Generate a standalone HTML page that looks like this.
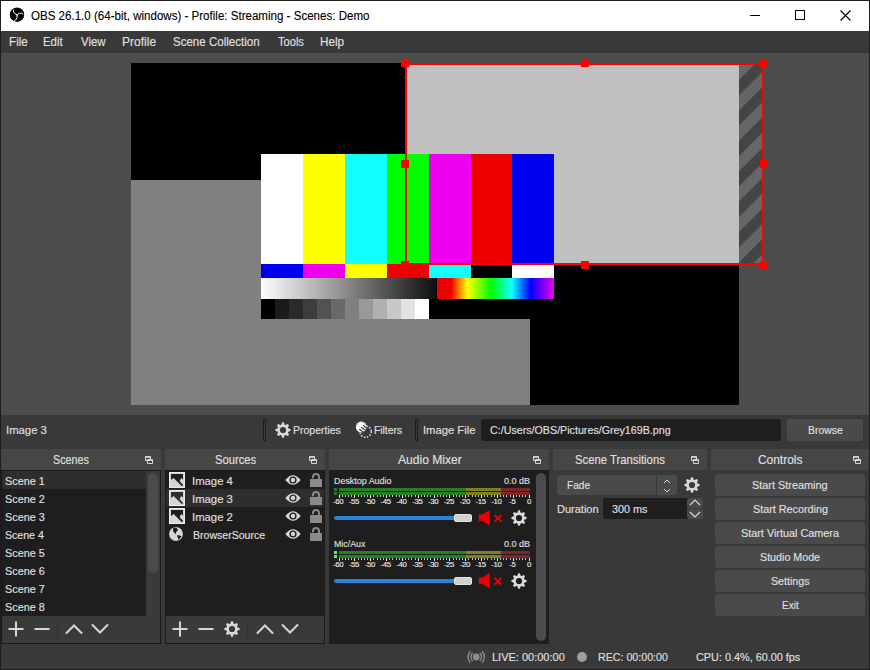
<!DOCTYPE html>
<html><head><meta charset="utf-8">
<style>
*{margin:0;padding:0;box-sizing:border-box}
html,body{width:870px;height:670px;overflow:hidden;background:#1d1d1d;font-family:"Liberation Sans",sans-serif}
.a{position:absolute}
.tx{position:absolute;white-space:pre;line-height:normal;transform-origin:0 0;font-family:"Liberation Sans",sans-serif;-webkit-text-stroke:0.12px currentColor}
svg{position:absolute;overflow:visible}
</style></head><body>
<!-- title bar -->
<div class="a" style="left:1px;top:1px;width:868px;height:30px;background:#fff"></div>
<svg style="left:9px;top:7px" width="16" height="16" viewBox="0 0 16 16">
 <circle cx="8" cy="7.7" r="7.2" fill="#000"/>
 <g fill="none" stroke="#fff" stroke-width="1" stroke-linecap="round">
  <path d="M7.9,7.9 L5.6,6.4 Q4.2,5.4 4.3,3"/>
  <path d="M7.9,7.9 L10.4,6.3 Q12.6,5.6 13.8,7"/>
  <path d="M7.9,7.9 L8.1,10.2 Q8,12.6 5,14.2"/>
 </g>
</svg>
<div class="a" style="left:750px;top:15px;width:10px;height:1px;background:#000"></div>
<div class="a" style="left:795px;top:10px;width:10px;height:10px;border:1px solid #000"></div>
<svg style="left:840px;top:10px" width="11" height="11" viewBox="0 0 11 11"><path d="M0.5,0.5 L10.5,10.5 M10.5,0.5 L0.5,10.5" stroke="#000" stroke-width="1.1"/></svg>
<!-- menubar -->
<div class="a" style="left:1px;top:31px;width:868px;height:22px;background:#3a393a"></div>
<!-- preview -->
<div class="a" style="left:1px;top:53px;width:868px;height:362px;background:#4c4c4c"></div>
<div class="a" style="left:131px;top:63px;width:608px;height:342px;background:#000"></div>
<div class="a" style="left:131px;top:180px;width:399px;height:225px;background:#808080"></div>
<div class="a" style="left:405px;top:63px;width:334px;height:202px;background:#c0c0c0"></div>
<svg style="overflow:hidden;left:739px;top:63px" width="25" height="202" viewBox="0 0 25 202"><rect width="25" height="202" fill="#666"/><g fill="#444"><polygon points="-43.8,0 -28.6,0 -268.6,240 -283.8,240"/><polygon points="-13.4,0 1.8,0 -238.2,240 -253.4,240"/><polygon points="17.0,0 32.2,0 -207.8,240 -223.0,240"/><polygon points="47.4,0 62.6,0 -177.4,240 -192.6,240"/><polygon points="77.8,0 93.0,0 -147.0,240 -162.2,240"/><polygon points="108.2,0 123.4,0 -116.6,240 -131.8,240"/><polygon points="138.6,0 153.8,0 -86.2,240 -101.4,240"/><polygon points="169.0,0 184.2,0 -55.8,240 -71.0,240"/><polygon points="199.4,0 214.6,0 -25.4,240 -40.6,240"/><polygon points="229.8,0 245.0,0 5.0,240 -10.2,240"/></g></svg>
<!-- test pattern -->
<div class="a" style="left:261px;top:154px;width:293px;height:165px;background:#000"></div>
<div class="a" style="left:261px;top:154px;width:293px;height:110px;background:linear-gradient(90deg,#fff 0px,#fff 42px,#ff0 42px,#ff0 84px,#1ff 84px,#1ff 126px,#0f0 126px,#0f0 168px,#e0e 168px,#e0e 210px,#e00 210px,#e00 251px,#00e 251px,#00e 293px)"></div>
<div class="a" style="left:261px;top:264px;width:293px;height:14px;background:linear-gradient(90deg,#00e 0px,#00e 42px,#e0e 42px,#e0e 84px,#ff0 84px,#ff0 126px,#e00 126px,#e00 168px,#1ff 168px,#1ff 210px,#000 210px,#000 251px,#fff 251px,#fff 293px)"></div>
<div class="a" style="left:261px;top:278px;width:175px;height:21px;background:linear-gradient(90deg,#fff,#0e0e0e)"></div>
<div class="a" style="left:437px;top:278px;width:117px;height:21px;background:linear-gradient(90deg,#e00 0%,#e00 12%,#ff0 26%,#0f0 46%,#1ff 64%,#00f 80%,#e0e 100%)"></div>
<div class="a" style="left:261px;top:299px;width:168px;height:20px;background:linear-gradient(90deg,#000 0,#000 8.333%,#1b1b1b 8.333%,#1b1b1b 16.67%,#2a2a2a 16.67%,#2a2a2a 25%,#3d3d3d 25%,#3d3d3d 33.33%,#525252 33.33%,#525252 41.67%,#696969 41.67%,#696969 50%,#808080 50%,#808080 58.33%,#999 58.33%,#999 66.67%,#b0b0b0 66.67%,#b0b0b0 75%,#c8c8c8 75%,#c8c8c8 83.33%,#e3e3e3 83.33%,#e3e3e3 91.67%,#fff 91.67%,#fff 100%)"></div>
<!-- red selection -->
<div class="a" style="left:405px;top:63px;width:359px;height:2px;background:#f00"></div>
<div class="a" style="left:405px;top:263px;width:359px;height:2px;background:#f00"></div>
<div class="a" style="left:405px;top:63px;width:2px;height:202px;background:#f00"></div>
<div class="a" style="left:762px;top:63px;width:2px;height:202px;background:#f00"></div>
<div class="a" style="left:401px;top:59px;width:8px;height:8px;background:#f00"></div>
<div class="a" style="left:581px;top:59px;width:8px;height:8px;background:#f00"></div>
<div class="a" style="left:760px;top:59px;width:8px;height:8px;background:#f00"></div>
<div class="a" style="left:401px;top:160px;width:8px;height:8px;background:#f00"></div>
<div class="a" style="left:760px;top:160px;width:8px;height:8px;background:#f00"></div>
<div class="a" style="left:401px;top:261px;width:8px;height:8px;background:#f00"></div>
<div class="a" style="left:581px;top:261px;width:8px;height:8px;background:#f00"></div>
<div class="a" style="left:760px;top:261px;width:8px;height:8px;background:#f00"></div>
<!-- toolbar row -->
<div class="a" style="left:1px;top:415px;width:868px;height:34px;background:#3a393a"></div>
<div class="a" style="left:263px;top:419px;width:3px;height:22px;border:1px solid #1f1e1f"></div>
<div class="a" style="left:415px;top:419px;width:3px;height:22px;border:1px solid #1f1e1f"></div>
<svg style="left:275px;top:422px" width="16" height="16" viewBox="-8 -8 16 16"><use href="#gear"/></svg>
<svg style="left:354px;top:420px" width="20" height="20" viewBox="0 0 20 20">
 <defs><clipPath id="fc"><circle cx="7.2" cy="7" r="5.4"/></clipPath></defs>
 <circle cx="11.6" cy="11.6" r="5.7" fill="none" stroke="#e4e4e4" stroke-width="1.5" stroke-dasharray="1.5 1.5"/>
 <circle cx="7.2" cy="7" r="5.4" fill="#f6f6f6"/>
 <g clip-path="url(#fc)" stroke="#3a393a" stroke-width="1.2"><path d="M5.2,9.2 L10.7,13 M7.2,7.3 L12.8,11.1 M9.3,5.4 L13.4,8.7"/></g>
</svg>
<div class="a" style="left:481px;top:419px;width:300px;height:22px;background:#1f1e1f;border-radius:3px"></div>
<div class="a" style="left:787px;top:419px;width:76px;height:22px;background:#4b4a4b;border-radius:3px"></div>
<!-- docks -->
<div class="a" style="left:1px;top:449px;width:868px;height:195px;background:#3a393a"></div>
<div class="a" style="left:1px;top:449px;width:160px;height:21px;background:#474647"></div>
<div class="a" style="left:165px;top:449px;width:160px;height:21px;background:#474647"></div>
<div class="a" style="left:329px;top:449px;width:220px;height:21px;background:#474647"></div>
<div class="a" style="left:553px;top:449px;width:154px;height:21px;background:#474647"></div>
<div class="a" style="left:711px;top:449px;width:158px;height:21px;background:#474647"></div>
<!-- float icons -->
<svg style="left:145px;top:456px" width="9" height="8"><path d="M0.5,0.5h5v4h-5z M2.5,3.5h5v4h-5z" fill="#474647" stroke="#d8d8d8" stroke-width="1"/><path d="M2.5,3.5h5v1.3h-5z" fill="#d8d8d8"/><path d="M0.5,0.5h5v1.3h-5z" fill="#d8d8d8"/></svg>
<svg style="left:309px;top:456px" width="9" height="8"><path d="M0.5,0.5h5v4h-5z M2.5,3.5h5v4h-5z" fill="#474647" stroke="#d8d8d8" stroke-width="1"/><path d="M2.5,3.5h5v1.3h-5z" fill="#d8d8d8"/><path d="M0.5,0.5h5v1.3h-5z" fill="#d8d8d8"/></svg>
<svg style="left:533px;top:456px" width="9" height="8"><path d="M0.5,0.5h5v4h-5z M2.5,3.5h5v4h-5z" fill="#474647" stroke="#d8d8d8" stroke-width="1"/><path d="M2.5,3.5h5v1.3h-5z" fill="#d8d8d8"/><path d="M0.5,0.5h5v1.3h-5z" fill="#d8d8d8"/></svg>
<svg style="left:691px;top:456px" width="9" height="8"><path d="M0.5,0.5h5v4h-5z M2.5,3.5h5v4h-5z" fill="#474647" stroke="#d8d8d8" stroke-width="1"/><path d="M2.5,3.5h5v1.3h-5z" fill="#d8d8d8"/><path d="M0.5,0.5h5v1.3h-5z" fill="#d8d8d8"/></svg>
<svg style="left:853px;top:456px" width="9" height="8"><path d="M0.5,0.5h5v4h-5z M2.5,3.5h5v4h-5z" fill="#474647" stroke="#d8d8d8" stroke-width="1"/><path d="M2.5,3.5h5v1.3h-5z" fill="#d8d8d8"/><path d="M0.5,0.5h5v1.3h-5z" fill="#d8d8d8"/></svg>
<!-- scenes list -->
<div class="a" style="left:1px;top:470px;width:160px;height:174px;background:#3b3a3b;border:1px solid #1a191a"></div>
<div class="a" style="left:2px;top:471px;width:144px;height:145px;background:#1f1e1f"></div>
<div class="a" style="left:2px;top:471px;width:144px;height:18px;background:#2f2e2f"></div>
<div class="a" style="left:148px;top:473px;width:10px;height:100px;background:#4c4b4c;border-radius:5px"></div>
<!-- sources list -->
<div class="a" style="left:165px;top:470px;width:160px;height:174px;background:#3b3a3b;border:1px solid #1a191a"></div>
<div class="a" style="left:166px;top:471px;width:158px;height:145px;background:#1f1e1f"></div>
<div class="a" style="left:166px;top:489px;width:158px;height:18px;background:#2f2e2f"></div>
<!-- audio mixer -->
<div class="a" style="left:329px;top:470px;width:220px;height:174px;background:#1f1e1f"></div>
<div class="a" style="left:536px;top:473px;width:10px;height:168px;background:#4c4b4c;border-radius:5px"></div>
<!-- transitions -->
<div class="a" style="left:557px;top:475px;width:120px;height:20px;background:#4b4a4b;border-radius:3px"></div>
<div class="a" style="left:656px;top:475px;width:1px;height:20px;background:#3a393a"></div>
<div class="a" style="left:603px;top:498px;width:85px;height:21px;background:#1f1e1f;border-radius:3px 0 0 3px"></div>
<div class="a" style="left:687px;top:498px;width:16px;height:10px;background:#4b4a4b;border-radius:3px 3px 0 0"></div>
<div class="a" style="left:687px;top:509px;width:16px;height:10px;background:#4b4a4b;border-radius:0 0 3px 3px"></div>
<svg style="left:684px;top:477px" width="16" height="16" viewBox="-8 -8 16 16"><use href="#gear"/></svg>
<svg style="left:660px;top:478px" width="14" height="16"><path d="M4,5 L7,2 L10,5 M4,11 L7,14 L10,11" fill="none" stroke="#d8d8d8" stroke-width="1"/></svg>
<svg style="left:687px;top:498px" width="16" height="21"><path d="M3,7 L8,2 L13,7 M3,14 L8,19 L13,14" fill="none" stroke="#d8d8d8" stroke-width="1.2"/></svg>
<!-- controls -->
<div class="a" style="left:715px;top:474px;width:150px;height:22px;background:#4b4a4b;border-radius:3px"></div>
<div class="a" style="left:715px;top:498px;width:150px;height:22px;background:#4b4a4b;border-radius:3px"></div>
<div class="a" style="left:715px;top:522px;width:150px;height:22px;background:#4b4a4b;border-radius:3px"></div>
<div class="a" style="left:715px;top:546px;width:150px;height:22px;background:#4b4a4b;border-radius:3px"></div>
<div class="a" style="left:715px;top:570px;width:150px;height:22px;background:#4b4a4b;border-radius:3px"></div>
<div class="a" style="left:715px;top:594px;width:150px;height:22px;background:#4b4a4b;border-radius:3px"></div>
<!-- status bar -->
<div class="a" style="left:1px;top:644px;width:868px;height:25px;background:#3a393a"></div>
<svg style="left:466px;top:647px" width="21" height="20" viewBox="0 0 21 20">
 <circle cx="10.2" cy="10" r="3.4" fill="#8c8c8c"/>
 <g fill="none" stroke="#8c8c8c" stroke-width="1.4">
  <path d="M6.6,6 A5.6,5.6 0 0 0 6.6,14"/><path d="M13.8,6 A5.6,5.6 0 0 1 13.8,14"/>
  <path d="M4.4,4.2 A8.4,8.4 0 0 0 4.4,15.8"/><path d="M16,4.2 A8.4,8.4 0 0 1 16,15.8"/>
 </g>
</svg>
<div class="a" style="left:577px;top:652px;width:10px;height:10px;border-radius:50%;background:#a0a0a0"></div>
<svg width="0" height="0" style="position:absolute">
 <defs>
  <g id="gear"><path fill-rule="evenodd" fill="#d8d8d8" d="M-1.73,-5.33 L-0.80,-7.66 L0.80,-7.66 L1.73,-5.33 L2.54,-4.99 L4.85,-5.98 L5.98,-4.85 L4.99,-2.54 L5.33,-1.73 L7.66,-0.80 L7.66,0.80 L5.33,1.73 L4.99,2.54 L5.98,4.85 L4.85,5.98 L2.54,4.99 L1.73,5.33 L0.80,7.66 L-0.80,7.66 L-1.73,5.33 L-2.54,4.99 L-4.85,5.98 L-5.98,4.85 L-4.99,2.54 L-5.33,1.73 L-7.66,0.80 L-7.66,-0.80 L-5.33,-1.73 L-4.99,-2.54 L-5.98,-4.85 L-4.85,-5.98 L-2.54,-4.99Z M0,-3.1A3.1,3.1 0 1 0 0,3.1A3.1,3.1 0 1 0 0,-3.1Z"/></g>
 </defs>
</svg>
<svg style="left:169px;top:472px" width="16" height="16" viewBox="0 0 16 16">
<rect x="0" y="0" width="16" height="16" fill="#d6d6d6"/>
<path d="M2,2 L14,2 L14,7.6 L12.1,6 L10.6,9.3 L14,12.7 L13.7,13.8 L12.7,13.9 L4.6,6 L2,7.9Z" fill="#1f1e1f"/>
<rect x="0.5" y="0.5" width="15" height="15" fill="none" stroke="#eaeaea" stroke-width="1"/>
</svg>
<svg style="left:169px;top:490px" width="16" height="16" viewBox="0 0 16 16">
<rect x="0" y="0" width="16" height="16" fill="#d6d6d6"/>
<path d="M2,2 L14,2 L14,7.6 L12.1,6 L10.6,9.3 L14,12.7 L13.7,13.8 L12.7,13.9 L4.6,6 L2,7.9Z" fill="#2f2e2f"/>
<rect x="0.5" y="0.5" width="15" height="15" fill="none" stroke="#eaeaea" stroke-width="1"/>
</svg>
<svg style="left:169px;top:508px" width="16" height="16" viewBox="0 0 16 16">
<rect x="0" y="0" width="16" height="16" fill="#d6d6d6"/>
<path d="M2,2 L14,2 L14,7.6 L12.1,6 L10.6,9.3 L14,12.7 L13.7,13.8 L12.7,13.9 L4.6,6 L2,7.9Z" fill="#1f1e1f"/>
<rect x="0.5" y="0.5" width="15" height="15" fill="none" stroke="#eaeaea" stroke-width="1"/>
</svg>
<svg style="left:168px;top:526px" width="16" height="16" viewBox="0 0 16 16">
<circle cx="8" cy="8" r="6.9" fill="#d6d6d6"/>
<path d="M5.4,1.6 L8.4,1.7 L9.9,3.4 L9.4,5 L8.1,6.1 L7.6,8.6 L6.7,7.1 L5.4,6 L5,3.8Z" fill="#1f1e1f"/>
<path d="M9.2,9.2 L11.2,9.2 L13.7,10.4 L12.1,12 L10.6,14.2 L10.1,12.2 L9.3,10.6Z" fill="#1f1e1f"/>
</svg>
<svg style="left:285px;top:474px" width="16" height="12" viewBox="0 0 16 12">
<path d="M0.3,6 Q8,-3.5 15.7,6 Q8,15.5 0.3,6Z" fill="#d6d6d6"/>
<circle cx="8" cy="6" r="3.6" fill="#1f1e1f"/><circle cx="8" cy="6" r="2.2" fill="#d6d6d6"/>
</svg>
<svg style="left:309px;top:472px" width="14" height="17" viewBox="0 0 14 17">
<path d="M4,6.2 L4,5 A3,3 0 0 1 10,5 L10,8" fill="none" stroke="#8a8a8a" stroke-width="2"/>
<rect x="1" y="7" width="12" height="8" fill="#8a8a8a"/>
</svg>
<svg style="left:285px;top:492px" width="16" height="12" viewBox="0 0 16 12">
<path d="M0.3,6 Q8,-3.5 15.7,6 Q8,15.5 0.3,6Z" fill="#d6d6d6"/>
<circle cx="8" cy="6" r="3.6" fill="#2f2e2f"/><circle cx="8" cy="6" r="2.2" fill="#d6d6d6"/>
</svg>
<svg style="left:309px;top:490px" width="14" height="17" viewBox="0 0 14 17">
<path d="M4,6.2 L4,5 A3,3 0 0 1 10,5 L10,8" fill="none" stroke="#8a8a8a" stroke-width="2"/>
<rect x="1" y="7" width="12" height="8" fill="#8a8a8a"/>
</svg>
<svg style="left:285px;top:510px" width="16" height="12" viewBox="0 0 16 12">
<path d="M0.3,6 Q8,-3.5 15.7,6 Q8,15.5 0.3,6Z" fill="#d6d6d6"/>
<circle cx="8" cy="6" r="3.6" fill="#1f1e1f"/><circle cx="8" cy="6" r="2.2" fill="#d6d6d6"/>
</svg>
<svg style="left:309px;top:508px" width="14" height="17" viewBox="0 0 14 17">
<path d="M4,6.2 L4,5 A3,3 0 0 1 10,5 L10,8" fill="none" stroke="#8a8a8a" stroke-width="2"/>
<rect x="1" y="7" width="12" height="8" fill="#8a8a8a"/>
</svg>
<svg style="left:285px;top:528px" width="16" height="12" viewBox="0 0 16 12">
<path d="M0.3,6 Q8,-3.5 15.7,6 Q8,15.5 0.3,6Z" fill="#d6d6d6"/>
<circle cx="8" cy="6" r="3.6" fill="#1f1e1f"/><circle cx="8" cy="6" r="2.2" fill="#d6d6d6"/>
</svg>
<svg style="left:309px;top:526px" width="14" height="17" viewBox="0 0 14 17">
<path d="M4,6.2 L4,5 A3,3 0 0 1 10,5 L10,8" fill="none" stroke="#8a8a8a" stroke-width="2"/>
<rect x="1" y="7" width="12" height="8" fill="#8a8a8a"/>
</svg>
<div class="a" style="left:334px;top:488px;width:3px;height:3px;background:#267f26"></div>
<div class="a" style="left:339px;top:488px;width:127px;height:3px;background:#267f26"></div>
<div class="a" style="left:466px;top:488px;width:35px;height:3px;background:#7f7f26"></div>
<div class="a" style="left:501px;top:488px;width:29px;height:3px;background:#7f2626"></div>
<div class="a" style="left:334px;top:492px;width:3px;height:3px;background:#267f26"></div>
<div class="a" style="left:339px;top:492px;width:127px;height:3px;background:#267f26"></div>
<div class="a" style="left:466px;top:492px;width:35px;height:3px;background:#7f7f26"></div>
<div class="a" style="left:501px;top:492px;width:29px;height:3px;background:#7f2626"></div>
<svg style="left:0;top:495px" width="870" height="4"><rect x="339" y="0" width="1" height="3" fill="#eeeeee"/><rect x="342" y="0" width="1" height="2" fill="#bdbdbd"/><rect x="345" y="0" width="1" height="2" fill="#bdbdbd"/><rect x="348" y="0" width="1" height="2" fill="#bdbdbd"/><rect x="351" y="0" width="1" height="2" fill="#bdbdbd"/><rect x="354" y="0" width="1" height="3" fill="#eeeeee"/><rect x="358" y="0" width="1" height="2" fill="#bdbdbd"/><rect x="361" y="0" width="1" height="2" fill="#bdbdbd"/><rect x="364" y="0" width="1" height="2" fill="#bdbdbd"/><rect x="367" y="0" width="1" height="2" fill="#bdbdbd"/><rect x="370" y="0" width="1" height="3" fill="#eeeeee"/><rect x="373" y="0" width="1" height="2" fill="#bdbdbd"/><rect x="377" y="0" width="1" height="2" fill="#bdbdbd"/><rect x="380" y="0" width="1" height="2" fill="#bdbdbd"/><rect x="383" y="0" width="1" height="2" fill="#bdbdbd"/><rect x="386" y="0" width="1" height="3" fill="#eeeeee"/><rect x="389" y="0" width="1" height="2" fill="#bdbdbd"/><rect x="392" y="0" width="1" height="2" fill="#bdbdbd"/><rect x="396" y="0" width="1" height="2" fill="#bdbdbd"/><rect x="399" y="0" width="1" height="2" fill="#bdbdbd"/><rect x="402" y="0" width="1" height="3" fill="#eeeeee"/><rect x="405" y="0" width="1" height="2" fill="#bdbdbd"/><rect x="408" y="0" width="1" height="2" fill="#bdbdbd"/><rect x="411" y="0" width="1" height="2" fill="#bdbdbd"/><rect x="415" y="0" width="1" height="2" fill="#bdbdbd"/><rect x="418" y="0" width="1" height="3" fill="#eeeeee"/><rect x="421" y="0" width="1" height="2" fill="#bdbdbd"/><rect x="424" y="0" width="1" height="2" fill="#bdbdbd"/><rect x="427" y="0" width="1" height="2" fill="#bdbdbd"/><rect x="430" y="0" width="1" height="2" fill="#bdbdbd"/><rect x="434" y="0" width="1" height="3" fill="#eeeeee"/><rect x="437" y="0" width="1" height="2" fill="#bdbdbd"/><rect x="440" y="0" width="1" height="2" fill="#bdbdbd"/><rect x="443" y="0" width="1" height="2" fill="#bdbdbd"/><rect x="446" y="0" width="1" height="2" fill="#bdbdbd"/><rect x="449" y="0" width="1" height="3" fill="#eeeeee"/><rect x="453" y="0" width="1" height="2" fill="#bdbdbd"/><rect x="456" y="0" width="1" height="2" fill="#bdbdbd"/><rect x="459" y="0" width="1" height="2" fill="#bdbdbd"/><rect x="462" y="0" width="1" height="2" fill="#bdbdbd"/><rect x="465" y="0" width="1" height="3" fill="#eeeeee"/><rect x="468" y="0" width="1" height="2" fill="#bdbdbd"/><rect x="472" y="0" width="1" height="2" fill="#bdbdbd"/><rect x="475" y="0" width="1" height="2" fill="#bdbdbd"/><rect x="478" y="0" width="1" height="2" fill="#bdbdbd"/><rect x="481" y="0" width="1" height="3" fill="#eeeeee"/><rect x="484" y="0" width="1" height="2" fill="#bdbdbd"/><rect x="487" y="0" width="1" height="2" fill="#bdbdbd"/><rect x="491" y="0" width="1" height="2" fill="#bdbdbd"/><rect x="494" y="0" width="1" height="2" fill="#bdbdbd"/><rect x="497" y="0" width="1" height="3" fill="#eeeeee"/><rect x="500" y="0" width="1" height="2" fill="#bdbdbd"/><rect x="503" y="0" width="1" height="2" fill="#bdbdbd"/><rect x="506" y="0" width="1" height="2" fill="#bdbdbd"/><rect x="510" y="0" width="1" height="2" fill="#bdbdbd"/><rect x="513" y="0" width="1" height="3" fill="#eeeeee"/><rect x="516" y="0" width="1" height="2" fill="#bdbdbd"/><rect x="519" y="0" width="1" height="2" fill="#bdbdbd"/><rect x="522" y="0" width="1" height="2" fill="#bdbdbd"/><rect x="525" y="0" width="1" height="2" fill="#bdbdbd"/><rect x="529" y="0" width="1" height="3" fill="#eeeeee"/></svg>
<div class="tx" style="left:327.0px;top:497px;width:24px;text-align:center;font-size:7.8px;color:#f0f0f0;letter-spacing:-0.4px;padding-right:1.8px">-60</div>
<div class="tx" style="left:342.8px;top:497px;width:24px;text-align:center;font-size:7.8px;color:#f0f0f0;letter-spacing:-0.4px;padding-right:1.8px">-55</div>
<div class="tx" style="left:358.7px;top:497px;width:24px;text-align:center;font-size:7.8px;color:#f0f0f0;letter-spacing:-0.4px;padding-right:1.8px">-50</div>
<div class="tx" style="left:374.5px;top:497px;width:24px;text-align:center;font-size:7.8px;color:#f0f0f0;letter-spacing:-0.4px;padding-right:1.8px">-45</div>
<div class="tx" style="left:390.3px;top:497px;width:24px;text-align:center;font-size:7.8px;color:#f0f0f0;letter-spacing:-0.4px;padding-right:1.8px">-40</div>
<div class="tx" style="left:406.2px;top:497px;width:24px;text-align:center;font-size:7.8px;color:#f0f0f0;letter-spacing:-0.4px;padding-right:1.8px">-35</div>
<div class="tx" style="left:422.0px;top:497px;width:24px;text-align:center;font-size:7.8px;color:#f0f0f0;letter-spacing:-0.4px;padding-right:1.8px">-30</div>
<div class="tx" style="left:437.8px;top:497px;width:24px;text-align:center;font-size:7.8px;color:#f0f0f0;letter-spacing:-0.4px;padding-right:1.8px">-25</div>
<div class="tx" style="left:453.7px;top:497px;width:24px;text-align:center;font-size:7.8px;color:#f0f0f0;letter-spacing:-0.4px;padding-right:1.8px">-20</div>
<div class="tx" style="left:469.5px;top:497px;width:24px;text-align:center;font-size:7.8px;color:#f0f0f0;letter-spacing:-0.4px;padding-right:1.8px">-15</div>
<div class="tx" style="left:485.3px;top:497px;width:24px;text-align:center;font-size:7.8px;color:#f0f0f0;letter-spacing:-0.4px;padding-right:1.8px">-10</div>
<div class="tx" style="left:501.2px;top:497px;width:24px;text-align:center;font-size:7.8px;color:#f0f0f0;letter-spacing:-0.4px;padding-right:1.8px">-5</div>
<div class="tx" style="left:517.0px;top:497px;width:24px;text-align:center;font-size:7.8px;color:#f0f0f0;letter-spacing:-0.4px;padding-right:0px">0</div>
<div class="a" style="left:334px;top:516px;width:122px;height:4px;background:#2a82da;border-radius:2px 0 0 2px"></div>
<div class="a" style="left:454px;top:514px;width:18px;height:8px;background:#d0d0d0;border:1px solid #e4e4e4;border-radius:2px"></div>
<svg style="left:478px;top:510px" width="26" height="16" viewBox="0 0 26 16">
<path d="M0.8,4.5 L4.5,4.5 L11.6,0 L11.6,15.6 L4.5,11 L0.8,11Z" fill="#e00"/>
<path d="M16.6,5 L23.4,11.6 M23.4,5 L16.6,11.6" stroke="#e00" stroke-width="1.8"/>
</svg>
<svg style="left:511px;top:510px" width="16" height="16" viewBox="-8 -8 16 16"><use href="#gear" fill="#d8d8d8"/></svg>
<div class="a" style="left:334px;top:551px;width:3px;height:3px;background:#4cff4c"></div>
<div class="a" style="left:339px;top:551px;width:127px;height:3px;background:#267f26"></div>
<div class="a" style="left:466px;top:551px;width:35px;height:3px;background:#7f7f26"></div>
<div class="a" style="left:501px;top:551px;width:29px;height:3px;background:#7f2626"></div>
<div class="a" style="left:334px;top:555px;width:3px;height:3px;background:#4cff4c"></div>
<div class="a" style="left:339px;top:555px;width:127px;height:3px;background:#267f26"></div>
<div class="a" style="left:466px;top:555px;width:35px;height:3px;background:#7f7f26"></div>
<div class="a" style="left:501px;top:555px;width:29px;height:3px;background:#7f2626"></div>
<svg style="left:0;top:558px" width="870" height="4"><rect x="339" y="0" width="1" height="3" fill="#eeeeee"/><rect x="342" y="0" width="1" height="2" fill="#bdbdbd"/><rect x="345" y="0" width="1" height="2" fill="#bdbdbd"/><rect x="348" y="0" width="1" height="2" fill="#bdbdbd"/><rect x="351" y="0" width="1" height="2" fill="#bdbdbd"/><rect x="354" y="0" width="1" height="3" fill="#eeeeee"/><rect x="358" y="0" width="1" height="2" fill="#bdbdbd"/><rect x="361" y="0" width="1" height="2" fill="#bdbdbd"/><rect x="364" y="0" width="1" height="2" fill="#bdbdbd"/><rect x="367" y="0" width="1" height="2" fill="#bdbdbd"/><rect x="370" y="0" width="1" height="3" fill="#eeeeee"/><rect x="373" y="0" width="1" height="2" fill="#bdbdbd"/><rect x="377" y="0" width="1" height="2" fill="#bdbdbd"/><rect x="380" y="0" width="1" height="2" fill="#bdbdbd"/><rect x="383" y="0" width="1" height="2" fill="#bdbdbd"/><rect x="386" y="0" width="1" height="3" fill="#eeeeee"/><rect x="389" y="0" width="1" height="2" fill="#bdbdbd"/><rect x="392" y="0" width="1" height="2" fill="#bdbdbd"/><rect x="396" y="0" width="1" height="2" fill="#bdbdbd"/><rect x="399" y="0" width="1" height="2" fill="#bdbdbd"/><rect x="402" y="0" width="1" height="3" fill="#eeeeee"/><rect x="405" y="0" width="1" height="2" fill="#bdbdbd"/><rect x="408" y="0" width="1" height="2" fill="#bdbdbd"/><rect x="411" y="0" width="1" height="2" fill="#bdbdbd"/><rect x="415" y="0" width="1" height="2" fill="#bdbdbd"/><rect x="418" y="0" width="1" height="3" fill="#eeeeee"/><rect x="421" y="0" width="1" height="2" fill="#bdbdbd"/><rect x="424" y="0" width="1" height="2" fill="#bdbdbd"/><rect x="427" y="0" width="1" height="2" fill="#bdbdbd"/><rect x="430" y="0" width="1" height="2" fill="#bdbdbd"/><rect x="434" y="0" width="1" height="3" fill="#eeeeee"/><rect x="437" y="0" width="1" height="2" fill="#bdbdbd"/><rect x="440" y="0" width="1" height="2" fill="#bdbdbd"/><rect x="443" y="0" width="1" height="2" fill="#bdbdbd"/><rect x="446" y="0" width="1" height="2" fill="#bdbdbd"/><rect x="449" y="0" width="1" height="3" fill="#eeeeee"/><rect x="453" y="0" width="1" height="2" fill="#bdbdbd"/><rect x="456" y="0" width="1" height="2" fill="#bdbdbd"/><rect x="459" y="0" width="1" height="2" fill="#bdbdbd"/><rect x="462" y="0" width="1" height="2" fill="#bdbdbd"/><rect x="465" y="0" width="1" height="3" fill="#eeeeee"/><rect x="468" y="0" width="1" height="2" fill="#bdbdbd"/><rect x="472" y="0" width="1" height="2" fill="#bdbdbd"/><rect x="475" y="0" width="1" height="2" fill="#bdbdbd"/><rect x="478" y="0" width="1" height="2" fill="#bdbdbd"/><rect x="481" y="0" width="1" height="3" fill="#eeeeee"/><rect x="484" y="0" width="1" height="2" fill="#bdbdbd"/><rect x="487" y="0" width="1" height="2" fill="#bdbdbd"/><rect x="491" y="0" width="1" height="2" fill="#bdbdbd"/><rect x="494" y="0" width="1" height="2" fill="#bdbdbd"/><rect x="497" y="0" width="1" height="3" fill="#eeeeee"/><rect x="500" y="0" width="1" height="2" fill="#bdbdbd"/><rect x="503" y="0" width="1" height="2" fill="#bdbdbd"/><rect x="506" y="0" width="1" height="2" fill="#bdbdbd"/><rect x="510" y="0" width="1" height="2" fill="#bdbdbd"/><rect x="513" y="0" width="1" height="3" fill="#eeeeee"/><rect x="516" y="0" width="1" height="2" fill="#bdbdbd"/><rect x="519" y="0" width="1" height="2" fill="#bdbdbd"/><rect x="522" y="0" width="1" height="2" fill="#bdbdbd"/><rect x="525" y="0" width="1" height="2" fill="#bdbdbd"/><rect x="529" y="0" width="1" height="3" fill="#eeeeee"/></svg>
<div class="tx" style="left:327.0px;top:560px;width:24px;text-align:center;font-size:7.8px;color:#f0f0f0;letter-spacing:-0.4px;padding-right:1.8px">-60</div>
<div class="tx" style="left:342.8px;top:560px;width:24px;text-align:center;font-size:7.8px;color:#f0f0f0;letter-spacing:-0.4px;padding-right:1.8px">-55</div>
<div class="tx" style="left:358.7px;top:560px;width:24px;text-align:center;font-size:7.8px;color:#f0f0f0;letter-spacing:-0.4px;padding-right:1.8px">-50</div>
<div class="tx" style="left:374.5px;top:560px;width:24px;text-align:center;font-size:7.8px;color:#f0f0f0;letter-spacing:-0.4px;padding-right:1.8px">-45</div>
<div class="tx" style="left:390.3px;top:560px;width:24px;text-align:center;font-size:7.8px;color:#f0f0f0;letter-spacing:-0.4px;padding-right:1.8px">-40</div>
<div class="tx" style="left:406.2px;top:560px;width:24px;text-align:center;font-size:7.8px;color:#f0f0f0;letter-spacing:-0.4px;padding-right:1.8px">-35</div>
<div class="tx" style="left:422.0px;top:560px;width:24px;text-align:center;font-size:7.8px;color:#f0f0f0;letter-spacing:-0.4px;padding-right:1.8px">-30</div>
<div class="tx" style="left:437.8px;top:560px;width:24px;text-align:center;font-size:7.8px;color:#f0f0f0;letter-spacing:-0.4px;padding-right:1.8px">-25</div>
<div class="tx" style="left:453.7px;top:560px;width:24px;text-align:center;font-size:7.8px;color:#f0f0f0;letter-spacing:-0.4px;padding-right:1.8px">-20</div>
<div class="tx" style="left:469.5px;top:560px;width:24px;text-align:center;font-size:7.8px;color:#f0f0f0;letter-spacing:-0.4px;padding-right:1.8px">-15</div>
<div class="tx" style="left:485.3px;top:560px;width:24px;text-align:center;font-size:7.8px;color:#f0f0f0;letter-spacing:-0.4px;padding-right:1.8px">-10</div>
<div class="tx" style="left:501.2px;top:560px;width:24px;text-align:center;font-size:7.8px;color:#f0f0f0;letter-spacing:-0.4px;padding-right:1.8px">-5</div>
<div class="tx" style="left:517.0px;top:560px;width:24px;text-align:center;font-size:7.8px;color:#f0f0f0;letter-spacing:-0.4px;padding-right:0px">0</div>
<div class="a" style="left:334px;top:579px;width:122px;height:4px;background:#2a82da;border-radius:2px 0 0 2px"></div>
<div class="a" style="left:454px;top:577px;width:18px;height:8px;background:#d0d0d0;border:1px solid #e4e4e4;border-radius:2px"></div>
<svg style="left:478px;top:573px" width="26" height="16" viewBox="0 0 26 16">
<path d="M0.8,4.5 L4.5,4.5 L11.6,0 L11.6,15.6 L4.5,11 L0.8,11Z" fill="#e00"/>
<path d="M16.6,5 L23.4,11.6 M23.4,5 L16.6,11.6" stroke="#e00" stroke-width="1.8"/>
</svg>
<svg style="left:511px;top:573px" width="16" height="16" viewBox="-8 -8 16 16"><use href="#gear" fill="#d8d8d8"/></svg>
<svg style="left:8px;top:621px" width="16" height="16"><path d="M8,0.5V15.5M0.5,8H15.5" stroke="#d6d6d6" stroke-width="2"/></svg>
<svg style="left:34px;top:621px" width="16" height="16"><path d="M0.5,8H15.5" stroke="#d6d6d6" stroke-width="2"/></svg>
<div class="a" style="left:57px;top:621px;width:1px;height:17px;background:#333233"></div>
<svg style="left:65px;top:624px" width="17" height="10"><path d="M1.5,9 L9,1.5 L16.5,9" fill="none" stroke="#d6d6d6" stroke-width="2" stroke-linecap="round"/></svg>
<svg style="left:92px;top:624px" width="17" height="10"><path d="M0.5,1 L8,8.5 L15.5,1" fill="none" stroke="#d6d6d6" stroke-width="2" stroke-linecap="round"/></svg>
<svg style="left:172px;top:621px" width="16" height="16"><path d="M8,0.5V15.5M0.5,8H15.5" stroke="#d6d6d6" stroke-width="2"/></svg>
<svg style="left:198px;top:621px" width="16" height="16"><path d="M0.5,8H15.5" stroke="#d6d6d6" stroke-width="2"/></svg>
<svg style="left:224px;top:621px" width="16" height="16" viewBox="-8 -8 16 16"><use href="#gear"/></svg>
<div class="a" style="left:247px;top:621px;width:1px;height:17px;background:#333233"></div>
<svg style="left:256px;top:624px" width="17" height="10"><path d="M1.5,9 L9,1.5 L16.5,9" fill="none" stroke="#d6d6d6" stroke-width="2" stroke-linecap="round"/></svg>
<svg style="left:282px;top:624px" width="17" height="10"><path d="M0.5,1 L8,8.5 L15.5,1" fill="none" stroke="#d6d6d6" stroke-width="2" stroke-linecap="round"/></svg>
<div class="tx" style="left:31.00px;top:9.00px;font-size:12px;color:#000;transform:scaleX(0.9630);">OBS 26.1.0 (64-bit, windows) - Profile: Streaming - Scenes: Demo</div>
<div class="tx" style="left:8.53px;top:35.00px;font-size:12px;color:#e1e0e1;transform:scaleX(0.9722);">File</div>
<div class="tx" style="left:43.05px;top:35.00px;font-size:12px;color:#e1e0e1;transform:scaleX(0.9500);">Edit</div>
<div class="tx" style="left:80.70px;top:35.00px;font-size:12px;color:#e1e0e1;transform:scaleX(0.9538);">View</div>
<div class="tx" style="left:121.50px;top:35.00px;font-size:12px;color:#e1e0e1;transform:scaleX(1.0030);">Profile</div>
<div class="tx" style="left:172.50px;top:35.00px;font-size:12px;color:#e1e0e1;transform:scaleX(0.9611);">Scene Collection</div>
<div class="tx" style="left:277.60px;top:35.00px;font-size:12px;color:#e1e0e1;transform:scaleX(0.9250);">Tools</div>
<div class="tx" style="left:319.62px;top:35.00px;font-size:12px;color:#e1e0e1;transform:scaleX(0.9750);">Help</div>
<div class="tx" style="left:5.97px;top:424.00px;font-size:11px;color:#e1e0e1;transform:scaleX(1.0282);">Image 3</div>
<div class="tx" style="left:293.30px;top:424.00px;font-size:11px;color:#e1e0e1;transform:scaleX(0.9540);">Properties</div>
<div class="tx" style="left:374.40px;top:424.00px;font-size:11px;color:#e1e0e1;transform:scaleX(0.9367);">Filters</div>
<div class="tx" style="left:422.98px;top:424.00px;font-size:11px;color:#e1e0e1;transform:scaleX(1.0200);">Image File</div>
<div class="tx" style="left:490.10px;top:424.00px;font-size:11px;color:#e1e0e1;transform:scaleX(0.9720);">C:/Users/OBS/Pictures/Grey169B.png</div>
<div class="tx" style="left:807.80px;top:424.00px;font-size:11px;color:#e1e0e1;transform:scaleX(0.9459);">Browse</div>
<div class="tx" style="left:53.40px;top:453.00px;font-size:12px;color:#e1e0e1;transform:scaleX(0.8975);">Scenes</div>
<div class="tx" style="left:215.00px;top:453.00px;font-size:12px;color:#e1e0e1;transform:scaleX(0.9364);">Sources</div>
<div class="tx" style="left:397.60px;top:453.00px;font-size:12px;color:#e1e0e1;transform:scaleX(1.0062);">Audio Mixer</div>
<div class="tx" style="left:575.30px;top:453.00px;font-size:12px;color:#e1e0e1;transform:scaleX(0.9417);">Scene Transitions</div>
<div class="tx" style="left:758.20px;top:453.00px;font-size:12px;color:#e1e0e1;transform:scaleX(0.9933);">Controls</div>
<div class="tx" style="left:5.40px;top:475.00px;font-size:11px;color:#e1e0e1;transform:scaleX(0.9850);">Scene 1</div>
<div class="tx" style="left:5.40px;top:493.00px;font-size:11px;color:#e1e0e1;transform:scaleX(0.9850);">Scene 2</div>
<div class="tx" style="left:5.40px;top:511.00px;font-size:11px;color:#e1e0e1;transform:scaleX(0.9850);">Scene 3</div>
<div class="tx" style="left:5.40px;top:529.00px;font-size:11px;color:#e1e0e1;transform:scaleX(0.9610);">Scene 4</div>
<div class="tx" style="left:5.40px;top:547.00px;font-size:11px;color:#e1e0e1;transform:scaleX(0.9850);">Scene 5</div>
<div class="tx" style="left:5.40px;top:565.00px;font-size:11px;color:#e1e0e1;transform:scaleX(0.9850);">Scene 6</div>
<div class="tx" style="left:5.40px;top:583.00px;font-size:11px;color:#e1e0e1;transform:scaleX(0.9850);">Scene 7</div>
<div class="tx" style="left:5.40px;top:601.00px;font-size:11px;color:#e1e0e1;transform:scaleX(0.9850);">Scene 8</div>
<div class="tx" style="left:192.17px;top:475.00px;font-size:11px;color:#e1e0e1;transform:scaleX(1.0282);">Image 4</div>
<div class="tx" style="left:192.17px;top:493.00px;font-size:11px;color:#e1e0e1;transform:scaleX(1.0282);">Image 3</div>
<div class="tx" style="left:192.17px;top:511.00px;font-size:11px;color:#e1e0e1;transform:scaleX(1.0282);">Image 2</div>
<div class="tx" style="left:193.20px;top:529.00px;font-size:11px;color:#e1e0e1;transform:scaleX(0.9587);">BrowserSource</div>
<div class="tx" style="left:334.00px;top:474.80px;font-size:9.8px;color:#e1e0e1;transform:scaleX(0.9095);">Desktop Audio</div>
<div class="tx" style="left:504.20px;top:474.80px;font-size:9.8px;color:#e1e0e1;transform:scaleX(0.9214);">0.0 dB</div>
<div class="tx" style="left:334.00px;top:537.80px;font-size:9.8px;color:#e1e0e1;transform:scaleX(0.9029);">Mic/Aux</div>
<div class="tx" style="left:504.20px;top:537.80px;font-size:9.8px;color:#e1e0e1;transform:scaleX(0.9214);">0.0 dB</div>
<div class="tx" style="left:567.00px;top:479.00px;font-size:11px;color:#e1e0e1;transform:scaleX(0.9200);">Fade</div>
<div class="tx" style="left:557.00px;top:503.00px;font-size:11px;color:#e1e0e1;transform:scaleX(1.0000);">Duration</div>
<div class="tx" style="left:611.80px;top:503.00px;font-size:11px;color:#e1e0e1;transform:scaleX(0.9833);">300 ms</div>
<div class="tx" style="left:752.20px;top:479.00px;font-size:11px;color:#e1e0e1;transform:scaleX(0.9895);">Start Streaming</div>
<div class="tx" style="left:752.80px;top:503.00px;font-size:11px;color:#e1e0e1;transform:scaleX(0.9816);">Start Recording</div>
<div class="tx" style="left:740.80px;top:527.00px;font-size:11px;color:#e1e0e1;transform:scaleX(0.9850);">Start Virtual Camera</div>
<div class="tx" style="left:760.20px;top:551.00px;font-size:11px;color:#e1e0e1;transform:scaleX(0.9726);">Studio Mode</div>
<div class="tx" style="left:770.70px;top:575.00px;font-size:11px;color:#e1e0e1;transform:scaleX(0.9700);">Settings</div>
<div class="tx" style="left:781.70px;top:599.00px;font-size:11px;color:#e1e0e1;transform:scaleX(0.9105);">Exit</div>
<div class="tx" style="left:492.00px;top:651.00px;font-size:11px;color:#e1e0e1;transform:scaleX(1.0000);">LIVE: 00:00:00</div>
<div class="tx" style="left:598.30px;top:651.00px;font-size:11px;color:#e1e0e1;transform:scaleX(0.9681);">REC: 00:00:00</div>
<div class="tx" style="left:695.50px;top:651.00px;font-size:11px;color:#e1e0e1;transform:scaleX(0.9858);">CPU: 0.4%, 60.00 fps</div>
</body></html>
